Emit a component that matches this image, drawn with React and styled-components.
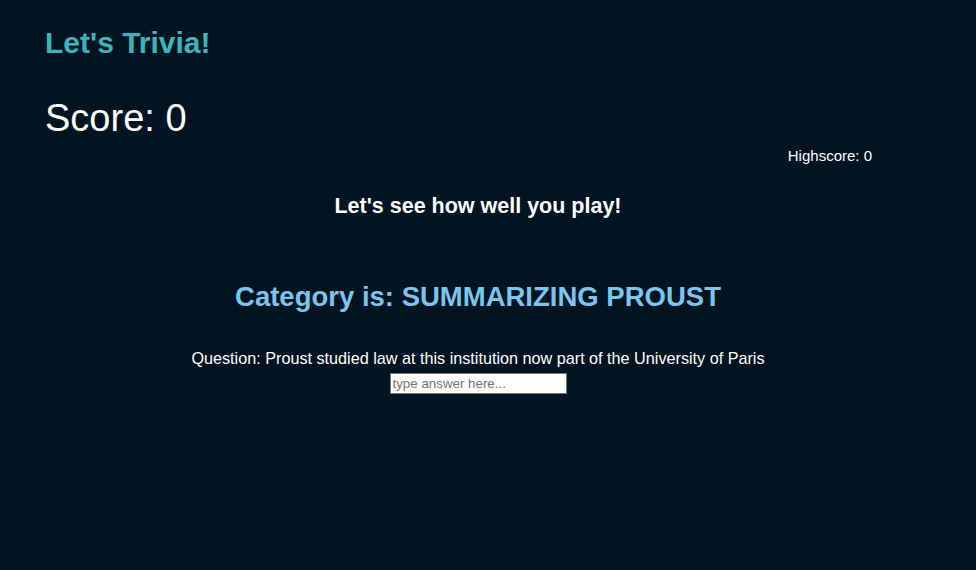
import React from 'react';
import styled, { createGlobalStyle } from 'styled-components';

const GlobalStyle = createGlobalStyle`
  html, body {
    margin: 0;
    padding: 0;
    background-color: #001421;
    min-height: 100%;
  }
  body {
    font-family: "Liberation Sans", Arial, sans-serif;
    color: #ffffff;
  }
`;

// Página inteira
const Page = styled.div`
  min-height: 570px;
  background-color: #001421;
  padding: 24px 65px 0 45px;
  box-sizing: border-box;
`;

const Title = styled.h1`
  margin: 0;
  font-size: 30px;
  font-weight: bold;
  color: #3bb4bb;
  line-height: 38px;
`;

const Score = styled.h2`
  margin: 34px 0 0 0;
  font-size: 38px;
  font-weight: normal;
  line-height: 44px;
`;

const HighscoreRow = styled.div`
  display: flex;
  justify-content: flex-end;
  padding-right: 39px;
  margin-top: 6px;
  font-size: 15px;
  line-height: 20px;
`;

const Main = styled.div`
  display: flex;
  flex-direction: column;
  align-items: center;
  text-align: center;
`;

const Subtitle = styled.h3`
  margin: 27px 0 0 0;
  font-size: 21.5px;
  font-weight: bold;
  line-height: 26px;
`;

const Category = styled.h2`
  margin: 61px 0 0 0;
  font-size: 27.5px;
  font-weight: bold;
  color: #7ac6ee;
  line-height: 34px;
`;

const Question = styled.p`
  margin: 32px 0 0 0;
  font-size: 16.2px;
  line-height: 24px;
`;

const AnswerInput = styled.input`
  margin-top: 3px;
  width: 177px;
  height: 21px;
  box-sizing: border-box;
  border: 1px solid #767676;
  padding: 1px 2px;
  font-family: "Liberation Sans", Arial, sans-serif;
  font-size: 13.33px;
  color: #000;
  background: #fff;

  &::placeholder {
    color: #757575;
  }
`;

const App = () => {
  return (
    <>
      <GlobalStyle />
      <Page>
        <Title>Let's Trivia!</Title>
        <Score>Score: 0</Score>
        <HighscoreRow>Highscore: 0</HighscoreRow>
        <Main>
          <Subtitle>Let's see how well you play!</Subtitle>
          <Category>Category is: SUMMARIZING PROUST</Category>
          <Question>Question: Proust studied law at this institution now part of the University of Paris</Question>
          <AnswerInput type="text" placeholder="type answer here..." />
        </Main>
      </Page>
    </>
  );
};

export default App;
